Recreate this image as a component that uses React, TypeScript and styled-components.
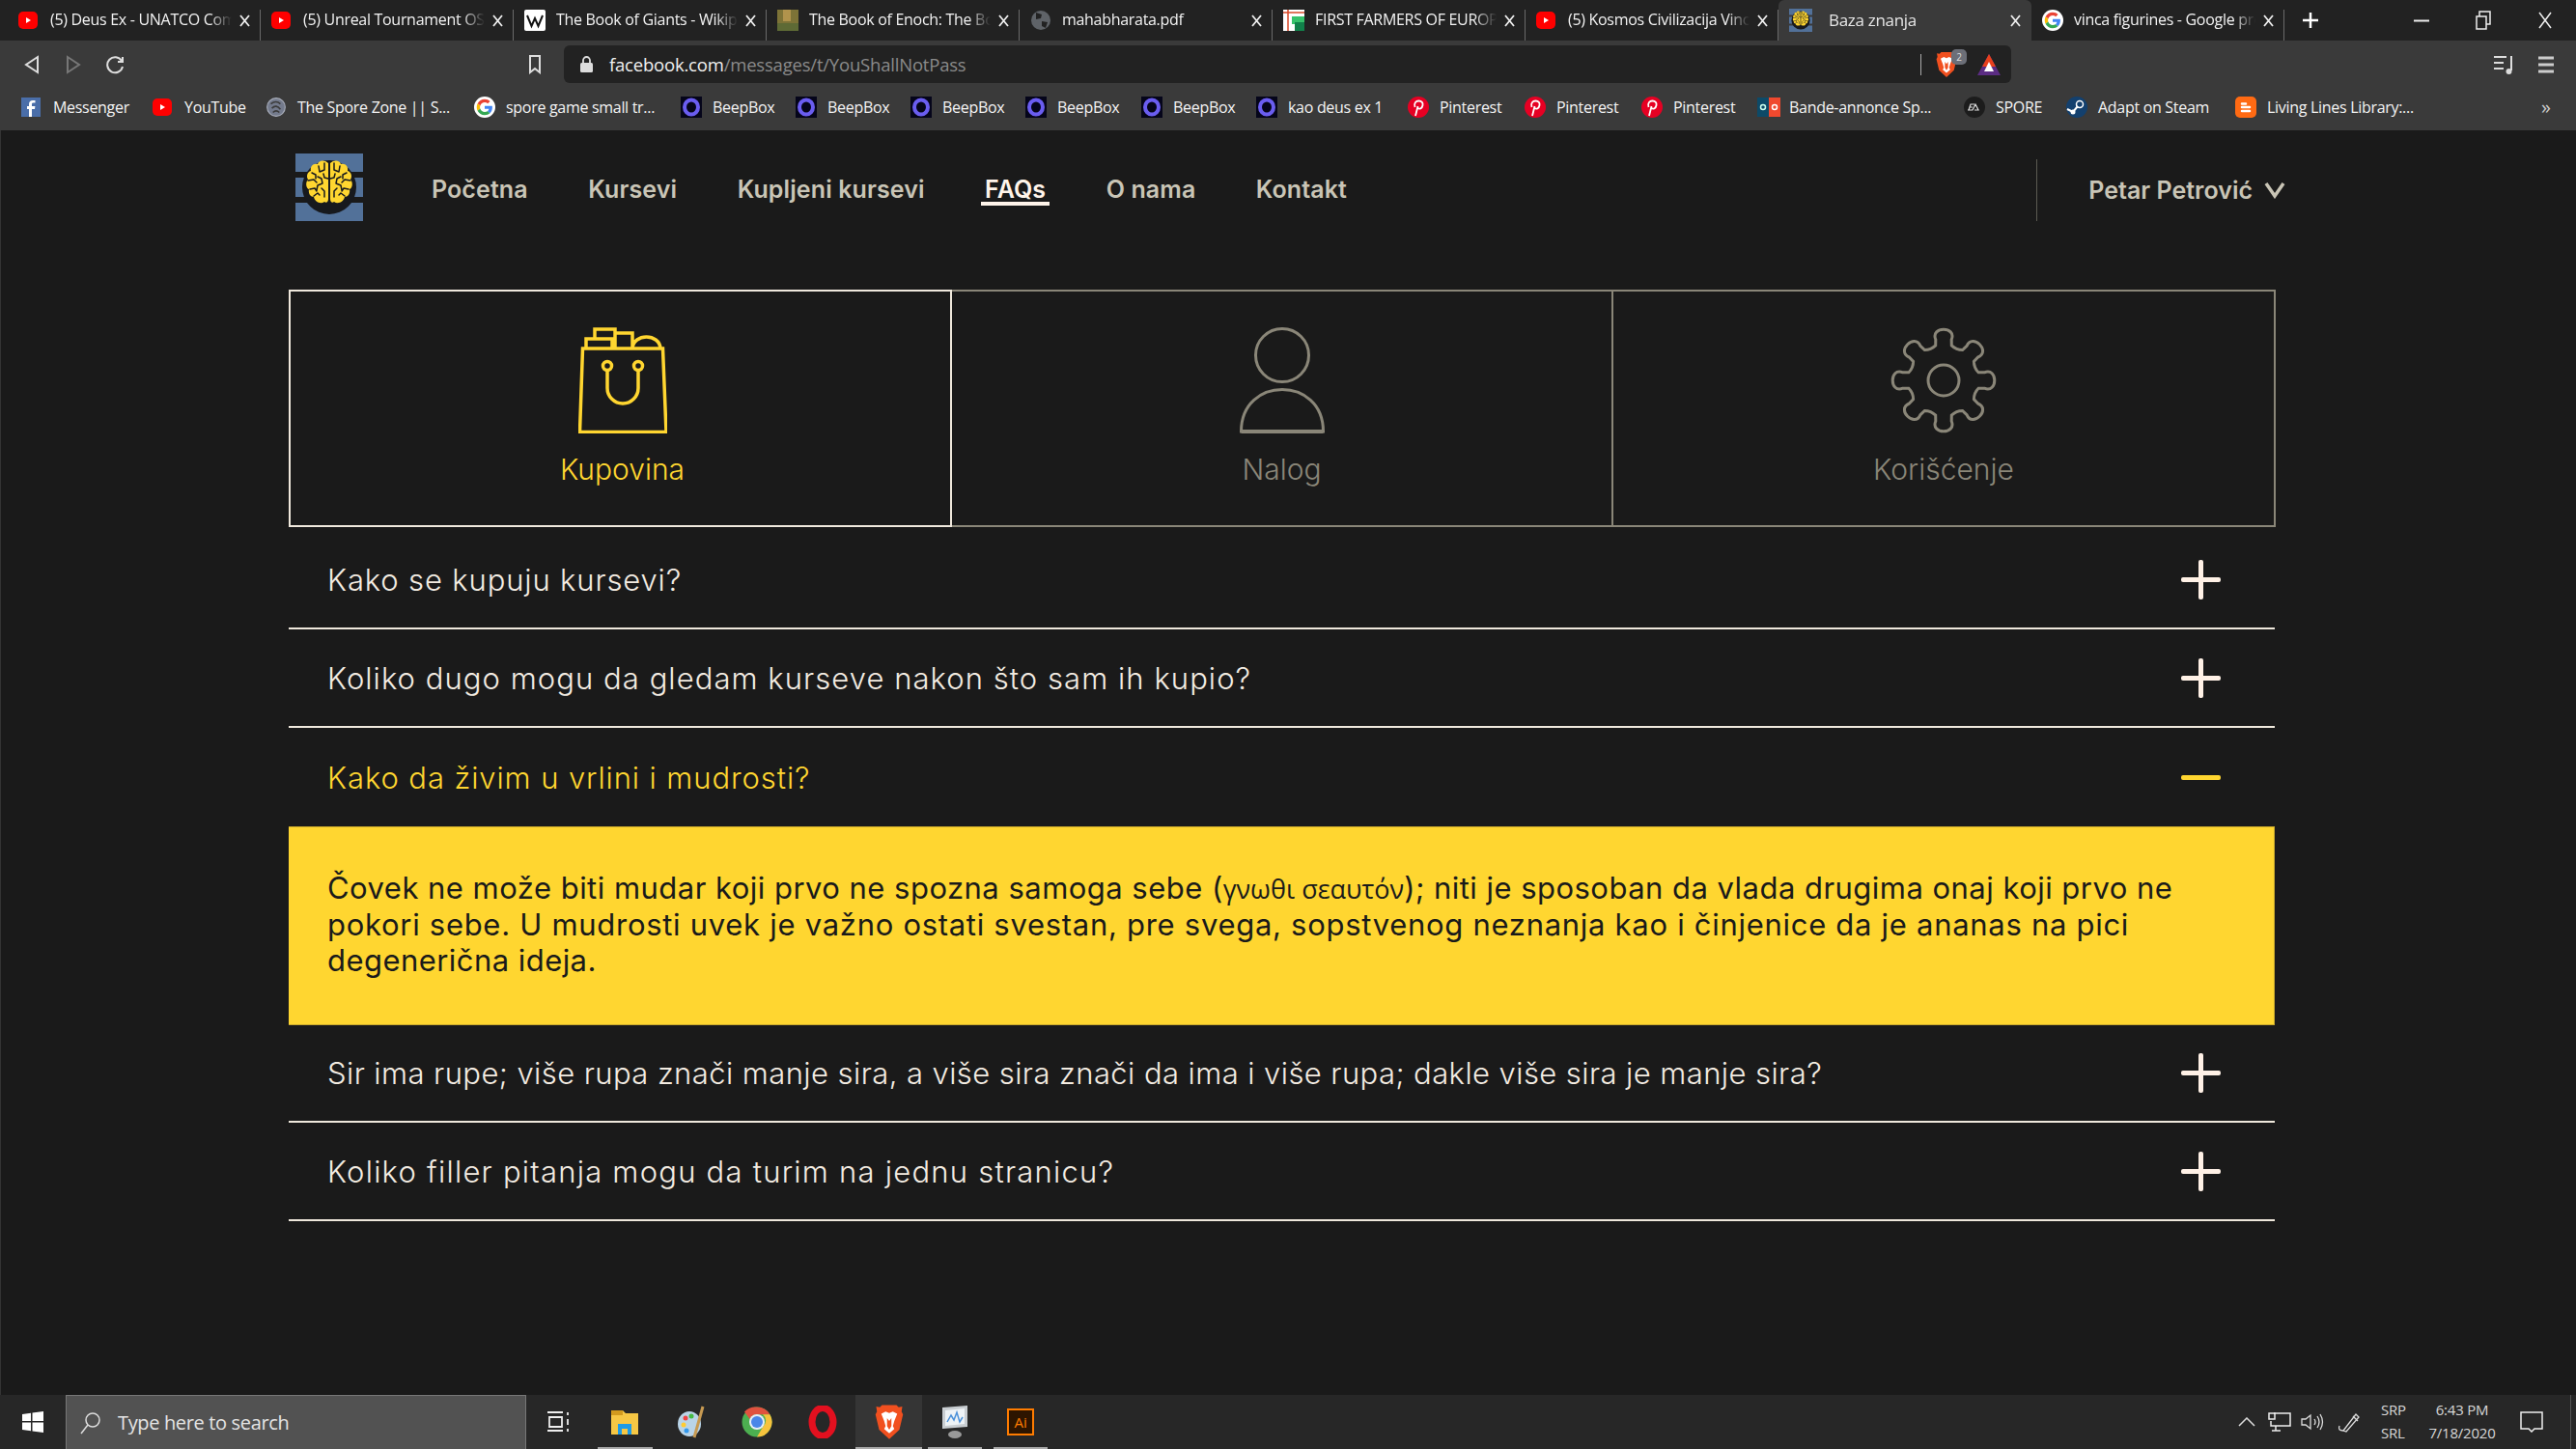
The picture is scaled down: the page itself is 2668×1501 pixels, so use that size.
import { FC, ReactNode } from 'react';
import styled, { createGlobalStyle } from 'styled-components';

const YELLOW = '#ffd630';
const PAGE = '#1a1a1a';
const MUTED = '#8a8678';

const GlobalStyle = createGlobalStyle`
  html, body {
    margin: 0;
    padding: 0;
    background: ${PAGE};
  }
  * {
    box-sizing: border-box;
  }
`;

/* ---------- favicons ---------- */

const Yt = () => (
  <svg width="20" height="20" viewBox="0 0 20 20">
    <rect y="1" width="20" height="18" rx="5" fill="#f00" />
    <path d="M8 7l5 3-5 3z" fill="#fff" />
  </svg>
);

const Wiki = () => (
  <svg width="22" height="22" viewBox="0 0 22 22">
    <rect width="22" height="22" rx="2" fill="#fff" />
    <path d="M3 6l4.500 11L11 9l3.500 8L19 6" fill="none" stroke="#111" strokeWidth="2" />
  </svg>
);

const Painting = () => (
  <svg width="22" height="22" viewBox="0 0 22 22">
    <rect width="22" height="22" fill="#7d7337" />
    <rect x="6" width="8" height="12" fill="#b0934c" />
    <rect y="14" width="22" height="8" fill="#5e6a35" />
  </svg>
);

const Globe = () => (
  <svg width="22" height="22" viewBox="0 0 22 22">
    <circle cx="11" cy="11" r="10" fill="#5f6368" />
    <path d="M6 3l6 2-1 4-5 1zM12 12l6 1-2 6-4-2z" fill="#222" />
  </svg>
);

const Farmers = () => (
  <svg width="22" height="22" viewBox="0 0 22 22">
    <rect width="22" height="22" fill="#fff" />
    <path d="M0 3h22M5 0v22" stroke="#d94a2a" strokeWidth="1.500" />
    <rect x="9" y="7" width="13" height="8" fill="#37c26b" />
    <rect x="12" y="13" width="10" height="9" fill="#11804a" />
  </svg>
);

const Google = () => (
  <svg width="22" height="22" viewBox="0 0 48 48">
    <circle cx="24" cy="24" r="24" fill="#fff" />
    <g transform="translate(6 6) scale(.75)">
      <path fill="#EA4335" d="M24 9.500c3.500 0 6.700 1.200 9.200 3.600l6.900-6.900C35.900 2.400 30.500 0 24 0 14.600 0 6.500 5.400 2.600 13.200l8 6.200C12.400 13.700 17.700 9.500 24 9.500z" />
      <path fill="#4285F4" d="M47 24.500c0-1.600-.1-3.100-.4-4.500H24v9h12.900c-.6 3-2.200 5.500-4.800 7.200l7.700 6C44.300 37.900 47 31.800 47 24.500z" />
      <path fill="#FBBC05" d="M10.500 28.600c-.5-1.400-.8-3-.8-4.600s.3-3.200.8-4.600l-8-6.200C.9 16.500 0 20.100 0 24s.9 7.500 2.600 10.800l7.900-6.200z" />
      <path fill="#34A853" d="M24 48c6.500 0 11.900-2.100 15.900-5.800l-7.700-6c-2.200 1.500-4.900 2.300-8.200 2.300-6.300 0-11.600-4.200-13.500-10l-8 6.200C6.500 42.600 14.600 48 24 48z" />
    </g>
  </svg>
);

const Facebook = () => (
  <svg width="20" height="20" viewBox="0 0 20 20">
    <rect width="20" height="20" fill="#4a6ea9" />
    <path d="M11 20v-8h3l.4-3H11V7c0-1 .4-1.500 1.500-1.500H14.500V3h-2.500C9.500 3 8 4.500 8 7v2H6v3h2v8z" fill="#fff" />
  </svg>
);

const SporeZone = () => (
  <svg width="22" height="22" viewBox="0 0 20 20">
    <circle cx="10" cy="10" r="8.500" fill="#737a8c" stroke="#a9aebb" />
    <path d="M5 7q5-4 9 0M6 11q4-4 8 1M7 15q3-3 6 0" fill="none" stroke="#3c3c3c" strokeWidth="1.500" />
  </svg>
);

const Beep = () => (
  <svg width="22" height="22" viewBox="0 0 22 22">
    <rect width="22" height="22" fill="#05051a" />
    <ellipse cx="11" cy="11" rx="7" ry="7.500" fill="none" stroke="#6a5df0" strokeWidth="4" />
  </svg>
);

const Pin = () => (
  <svg width="22" height="22" viewBox="0 0 22 22">
    <circle cx="11" cy="11" r="11" fill="#e60023" />
    <path d="M8 20l2.500-10M7.500 11c-1.500-4 1-6.500 4-6.500 3 0 4.500 2 4 4.500-.5 3-3 4.500-5 3" fill="none" stroke="#fff" strokeWidth="1.800" />
  </svg>
);

const Bande = () => (
  <svg width="24" height="20" viewBox="0 0 24 20">
    <rect width="12" height="20" fill="#0d4a68" />
    <rect x="12" width="12" height="20" fill="#f0492e" />
    <circle cx="6" cy="10" r="2.500" fill="none" stroke="#cfe" strokeWidth="1.500" />
    <circle cx="18" cy="10" r="2.500" fill="none" stroke="#fff" strokeWidth="1.500" />
  </svg>
);

const Ea = () => (
  <svg width="22" height="22" viewBox="0 0 22 22">
    <circle cx="11" cy="11" r="11" fill="#1c1c1c" />
    <path d="M5 14l2-6h4M6 11h3M4 14h5l3-6 3 6h-4" fill="none" stroke="#ddd" strokeWidth="1.200" />
  </svg>
);

const Steam = () => (
  <svg width="22" height="22" viewBox="0 0 22 22">
    <circle cx="11" cy="11" r="11" fill="#13406e" />
    <circle cx="14" cy="8" r="3.500" fill="none" stroke="#fff" strokeWidth="1.500" />
    <path d="M1 13l6 3 5-6" fill="none" stroke="#fff" strokeWidth="2" />
    <circle cx="7" cy="16" r="2.500" fill="#fff" />
  </svg>
);

const Blogger = () => (
  <svg width="22" height="22" viewBox="0 0 22 22">
    <rect width="22" height="22" rx="5" fill="#ff6a13" />
    <path d="M7 7.500h4M7 11h8M7 15h8" stroke="#fff" strokeWidth="2.500" strokeLinecap="round" />
  </svg>
);

const BraveLion: FC<{ size?: number }> = ({ size = 22 }) => (
  <svg width={size} height={size * 1.25} viewBox="0 0 20 25">
    <path d="M5 1h10l1.500 1.500L19 2l-.500 3.500 1 2L17 18l-7 6.500L3 18 .5 7.500l1-2L1 2l2.500.5z" fill="#f1501f" />
    <path d="M4.500 7l3-1.500 2.500 1 2.500-1 3 1.500-2 5-1 3.500 1 2-3.500 3-3.500-3 1-2-1-3.500z" fill="#fff" />
    <path d="M8.500 10v5.500L10 18l1.500-2.500V10l-1.500 2z" fill="#f1501f" />
  </svg>
);

/* ---------- logo ---------- */

const BRAIN_LEFT =
  'M34 10C30 6 24 7 23 11 18 10 15 14 16 18 12 19 11 24 13 27 10 30 11 36 14 37 13 42 16 45 19 45 20 50 26 53 30 50 32 52 34 50 34 47Z';
const BRAIN_FOLDS = 'M30 10v7l-5 2M24 13l1 6M17 20l4 2v4M13 28l6-1 3 3M23 24l4 2 1 5-5 2-1 5M15 37l5-1 2 3M19 44l4-3 2 2M27 36l3 3v6M34 26l-4-1-1-4';

const BrainLogo: FC<{ size: number }> = ({ size }) => (
  <svg width={size} height={size} viewBox="0 0 70 70">
    <path d="M0 0h70v19H0zM0 25h70v20H0zM0 51h70v19H0z" fill="#527199" />
    <circle cx="35" cy="35" r="28" fill="#17191d" />
    {['', 'translate(70 0) scale(-1 1)'].map((t) => (
      <g key={t} transform={t}>
        <path d={BRAIN_LEFT} fill={YELLOW} />
        <path d={BRAIN_FOLDS} fill="none" stroke="#17191d" strokeWidth="1.500" strokeLinecap="round" strokeLinejoin="round" />
      </g>
    ))}
  </svg>
);

/* ---------- tab strip ---------- */

const TabStrip = styled.div`
  display: flex;
  align-items: stretch;
  height: 42px;
  padding-left: 8px;
  background: #222;
  font-family: 'Open Sans', 'Liberation Sans', sans-serif;
`;

const TabItem = styled.div<{ $active?: boolean }>`
  position: relative;
  display: flex;
  align-items: center;
  width: 262px;
  padding: 0 0 0 11px;
  color: ${(p) => (p.$active ? '#e6e6e6' : '#f2f2f2')};
  background: ${(p) => (p.$active ? '#3a3a3a' : 'transparent')};
  border-radius: ${(p) => (p.$active ? '6px 6px 0 0' : '0')};
  font-size: ${(p) => (p.$active ? 17 : 16)}px;
  letter-spacing: -0.3px;
  &::after {
    content: '';
    position: absolute;
    right: 0;
    top: 10px;
    bottom: 0;
    width: 1px;
    background: ${(p) => (p.$active ? 'transparent' : '#6a6a6a')};
  }
`;

const TabIcon = styled.span<{ $active?: boolean }>`
  display: flex;
  width: ${(p) => (p.$active ? 41 : 33)}px;
  flex: none;
`;

const TabTitle = styled.span<{ $active?: boolean }>`
  width: ${(p) => (p.$active ? 182 : 190)}px;
  flex: none;
  padding-bottom: 2px;
  white-space: nowrap;
  overflow: hidden;
  -webkit-mask-image: linear-gradient(to right, #000 165px, transparent 188px);
  mask-image: linear-gradient(to right, #000 165px, transparent 188px);
`;

const CloseMark = styled.svg`
  margin-left: 6px;
  flex: none;
`;

const X: FC = () => (
  <CloseMark width="11" height="13" viewBox="0 0 11 13">
    <path d="M1 1l9 11M10 1L1 12" stroke="#eee" strokeWidth="1.800" />
  </CloseMark>
);

const NewTab = styled.div`
  width: 54px;
  display: flex;
  align-items: center;
  justify-content: center;
`;

const WindowControls = styled.div`
  margin-left: auto;
  display: flex;
  align-items: center;
`;

const WinButton = styled.div`
  width: 64px;
  height: 42px;
  display: flex;
  align-items: center;
  justify-content: center;
`;

const TABS: { title: string; icon: ReactNode; active?: boolean }[] = [
  { title: '(5) Deus Ex - UNATCO Combat', icon: <Yt /> },
  { title: '(5) Unreal Tournament OST', icon: <Yt /> },
  { title: 'The Book of Giants - Wikipedia', icon: <Wiki /> },
  { title: 'The Book of Enoch: The Book', icon: <Painting /> },
  { title: 'mahabharata.pdf', icon: <Globe /> },
  { title: 'FIRST FARMERS OF EUROPE', icon: <Farmers /> },
  { title: '(5) Kosmos Civilizacija Vinca', icon: <Yt /> },
  { title: 'Baza znanja', icon: <BrainLogo size={24} />, active: true },
  { title: 'vinca figurines - Google pretraga', icon: <Google /> },
];

/* ---------- toolbar ---------- */

const Toolbar = styled.div`
  display: flex;
  align-items: center;
  height: 46px;
  padding-top: 3px;
  background: #3a3a3a;
  font-family: 'Open Sans', 'Liberation Sans', sans-serif;
`;

const ToolSlot = styled.div<{ $w: number; $end?: boolean }>`
  display: flex;
  align-items: center;
  justify-content: ${(p) => (p.$end ? 'flex-end' : 'center')};
  padding-right: ${(p) => (p.$end ? 23 : 0)}px;
  width: ${(p) => p.$w}px;
  flex: none;
`;

const AddressBar = styled.div`
  display: flex;
  align-items: center;
  width: 1499px;
  height: 39px;
  flex: none;
  background: #222;
  border-radius: 6px;
  font-size: 18.5px;
  letter-spacing: -0.2px;
`;

const Lock = styled.div`
  display: flex;
  justify-content: center;
  width: 47px;
  flex: none;
`;

const Domain = styled.span`
  color: #f0f0f0;
`;

const UrlPath = styled.span`
  color: #8a8a8a;
`;

const UrlSpacer = styled.div`
  flex: 1;
`;

const AddressDivider = styled.div`
  width: 1px;
  height: 22px;
  background: #aaa;
`;

const ShieldWrap = styled.div`
  position: relative;
  display: flex;
  margin: 0 20px 0 15px;
`;

const ShieldBadge = styled.span`
  position: absolute;
  left: 16px;
  top: -2px;
  width: 16px;
  height: 16px;
  border-radius: 5px;
  background: #6c6f78;
  color: #ddd;
  font-size: 10px;
  line-height: 16px;
  text-align: center;
`;

const ExtensionMark = styled.svg`
  margin-right: 10px;
`;

const ToolbarRight = styled.div`
  display: flex;
  margin-left: 488px;
`;

/* ---------- bookmarks ---------- */

const BookmarkBar = styled.div`
  display: flex;
  align-items: center;
  height: 47px;
  padding: 0 0 2px 22px;
  background: #3a3a3a;
  font-family: 'Open Sans', 'Liberation Sans', sans-serif;
  font-size: 16px;
  letter-spacing: -0.3px;
  color: #f4f4f4;
`;

const Bookmark = styled.div<{ $w: number }>`
  display: flex;
  align-items: center;
  width: ${(p) => p.$w}px;
  flex: none;
  white-space: nowrap;
`;

const BookmarkIcon = styled.span`
  display: flex;
  width: 33px;
  flex: none;
`;

const MoreBookmarks = styled.span`
  margin-left: 129px;
  font-size: 20px;
  color: #ccc;
`;

const BOOKMARKS: { label: string; icon: ReactNode; w: number }[] = [
  { label: 'Messenger', icon: <Facebook />, w: 136 },
  { label: 'YouTube', icon: <Yt />, w: 117 },
  { label: 'The Spore Zone || S...', icon: <SporeZone />, w: 216 },
  { label: 'spore game small tr...', icon: <Google />, w: 214 },
  { label: 'BeepBox', icon: <Beep />, w: 119 },
  { label: 'BeepBox', icon: <Beep />, w: 119 },
  { label: 'BeepBox', icon: <Beep />, w: 119 },
  { label: 'BeepBox', icon: <Beep />, w: 120 },
  { label: 'BeepBox', icon: <Beep />, w: 119 },
  { label: 'kao deus ex 1', icon: <Beep />, w: 157 },
  { label: 'Pinterest', icon: <Pin />, w: 121 },
  { label: 'Pinterest', icon: <Pin />, w: 121 },
  { label: 'Pinterest', icon: <Pin />, w: 120 },
  { label: 'Bande-annonce Sp...', icon: <Bande />, w: 214 },
  { label: 'SPORE', icon: <Ea />, w: 106 },
  { label: 'Adapt on Steam', icon: <Steam />, w: 175 },
  { label: 'Living Lines Library:...', icon: <Blogger />, w: 188 },
];

/* ---------- site header ---------- */

const Page = styled.main`
  flex: 1;
  padding-left: 298px;
  background: ${PAGE};
  border-left: 1px solid #333;
  font-family: Inter, 'Open Sans', sans-serif;
`;

const SiteNav = styled.nav`
  display: flex;
  align-items: center;
  height: 70px;
  margin: 24px 0 71px;
  padding-left: 7px;
  width: 2068px;
`;

const NavLinks = styled.div`
  display: flex;
  gap: 62.5px;
  margin-left: 71px;
  padding-top: 3px;
`;

const NavLink = styled.a<{ $current?: boolean }>`
  position: relative;
  color: ${(p) => (p.$current ? '#fff4ea' : '#c9c5b6')};
  font-size: 25px;
  font-weight: 600;
  letter-spacing: 0.1px;
  &::after {
    content: '';
    display: ${(p) => (p.$current ? 'block' : 'none')};
    position: absolute;
    left: -4px;
    right: -4px;
    bottom: -2px;
    height: 4px;
    background: #fff4ea;
  }
`;

const UserMenu = styled.div`
  display: flex;
  align-items: center;
  gap: 12px;
  height: 64px;
  margin: 5px 0 0 auto;
  padding-left: 53px;
  border-left: 1px solid #5c5a52;
  color: #c9c5b6;
  font-size: 25px;
  font-weight: 600;
`;

/* ---------- faq ---------- */

const FaqBlock = styled.section`
  width: 2058px;
`;

const CategoryRow = styled.div`
  display: grid;
  grid-template-columns: 687px 685px 686px;
  height: 246px;
`;

const Category = styled.div<{ $active?: boolean }>`
  display: flex;
  flex-direction: column;
  align-items: center;
  padding: 37px 0 0 ${(p) => (p.$active ? 4 : 0)}px;
  border: 2px solid ${(p) => (p.$active ? '#efe8dc' : MUTED)};
  margin-left: -2px;
  z-index: ${(p) => (p.$active ? 1 : 0)};
  color: ${(p) => (p.$active ? YELLOW : MUTED)};
  font-size: 30px;
  font-weight: 300;
  &:first-child {
    margin-left: 0;
  }
`;

const CategoryIcon = styled.svg`
  display: block;
  height: 110px;
  margin-bottom: 19px;
`;

const Question = styled.div<{ $open?: boolean; $first?: boolean; $track: number }>`
  display: flex;
  align-items: center;
  justify-content: space-between;
  width: 2057px;
  height: 102px;
  margin-top: ${(p) => (p.$first ? 4 : 0)}px;
  padding: 0 56px 0 40px;
  border-bottom: ${(p) => (p.$open ? 'none' : '2px solid #efe8dc')};
  color: ${(p) => (p.$open ? YELLOW : '#f3ece2')};
  font-size: 31px;
  font-weight: 300;
  letter-spacing: ${(p) => p.$track}px;
`;

const Toggle = styled.span<{ $open?: boolean }>`
  position: relative;
  width: 41px;
  height: 41px;
  flex: none;
  &::before,
  &::after {
    content: '';
    position: absolute;
    border-radius: 2px;
    background: ${(p) => (p.$open ? YELLOW : '#fff1e6')};
  }
  &::before {
    left: 0;
    right: 0;
    top: 18px;
    height: 5px;
  }
  &::after {
    display: ${(p) => (p.$open ? 'none' : 'block')};
    top: 0;
    bottom: 0;
    left: 18px;
    width: 5px;
  }
`;

const Answer = styled.div`
  width: 2057px;
  height: 206px;
  padding: 44px 40px 0;
  background: ${YELLOW};
  border: 1px solid #c9a92c;
  border-left: none;
  color: ${PAGE};
  font-size: 31px;
  font-weight: 400;
  line-height: 37px;
`;

const AnswerLine = styled.div<{ $track: number }>`
  letter-spacing: ${(p) => p.$track}px;
`;

const GreekPhrase = styled.span`
  font-family: 'Open Sans', 'Noto Sans', sans-serif;
  font-size: 27px;
  letter-spacing: 0;
`;

const LowerQuestions = styled.div`
  margin-top: -1px;
`;

const QUESTIONS_TOP = [
  { text: 'Kako se kupuju kursevi?', track: 0.85 },
  { text: 'Koliko dugo mogu da gledam kurseve nakon što sam ih kupio?', track: 1.05 },
];
const QUESTIONS_BOTTOM = [
  { text: 'Sir ima rupe; više rupa znači manje sira, a više sira znači da ima i više rupa; dakle više sira je manje sira?', track: 0.42 },
  { text: 'Koliko filler pitanja mogu da turim na jednu stranicu?', track: 1.23 },
];

const Gear: FC = () => {
  // eight rounded lobes around the hub
  let d = '';
  for (let i = 0; i < 8; i++) {
    const a = ((i * 45 - 90) * Math.PI) / 180;
    const pt = (r: number, off: number) => {
      const t = a + (off * Math.PI) / 180;
      return `${(55 + r * Math.cos(t)).toFixed(1)} ${(55 + r * Math.sin(t)).toFixed(1)}`;
    };
    d += `${i === 0 ? 'M' : 'L'}${pt(37, -13)} L${pt(43, -11)} C${pt(58, -14)} ${pt(58, 14)} ${pt(43, 11)} L${pt(37, 13)} Q${pt(34, 22.5)} ${pt(37, 32)} `;
  }
  return (
    <CategoryIcon viewBox="0 0 110 110" fill="none" stroke={MUTED} strokeWidth="3">
      <path d={`${d}Z`} />
      <circle cx="55" cy="55" r="16" />
    </CategoryIcon>
  );
};

/* ---------- taskbar ---------- */

const Taskbar = styled.footer`
  display: flex;
  height: 56px;
  background: #272727;
  font-family: 'Open Sans', 'Liberation Sans', sans-serif;
  color: #ddd;
`;

const StartButton = styled.div`
  display: flex;
  align-items: center;
  justify-content: center;
  width: 68px;
`;

const SearchBox = styled.div`
  display: flex;
  align-items: center;
  gap: 17px;
  width: 477px;
  padding: 0 0 0 14px;
  background: #525252;
  border: 1px solid #777;
  border-bottom: none;
  color: #e4e4e4;
  font-size: 20px;
  letter-spacing: -0.35px;
`;

const AppSlot = styled.div<{ $running?: boolean; $focused?: boolean }>`
  position: relative;
  display: flex;
  align-items: center;
  justify-content: center;
  width: 68.3px;
  flex: none;
  background: ${(p) => (p.$focused ? '#353535' : 'transparent')};
  &::after {
    content: '';
    display: ${(p) => (p.$running ? 'block' : 'none')};
    position: absolute;
    left: ${(p) => (p.$focused ? 0 : 6)}px;
    right: ${(p) => (p.$focused ? 0 : 6)}px;
    bottom: 0;
    height: 2px;
    background: #aaa;
  }
`;

const AiTile = styled.span`
  display: flex;
  align-items: center;
  justify-content: center;
  width: 28px;
  height: 28px;
  background: #2d1500;
  border: 2px solid #ff7c00;
  color: #ff7c00;
  font-size: 15px;
`;

const Tray = styled.div`
  display: flex;
  align-items: center;
  margin-left: auto;
`;

const TraySlot = styled.div<{ $w: number }>`
  display: flex;
  align-items: center;
  justify-content: center;
  width: ${(p) => p.$w}px;
  flex: none;
`;

const TrayText = styled.div<{ $w: number; $align?: string; $inset?: number }>`
  width: ${(p) => p.$w}px;
  flex: none;
  padding-left: ${(p) => p.$inset || 0}px;
  padding-bottom: 2px;
  font-size: 15px;
  line-height: 24px;
  letter-spacing: -0.2px;
  text-align: ${(p) => p.$align || 'left'};
  color: #d8d8d8;
`;

const TrayEdge = styled.div`
  width: 1px;
  height: 100%;
  margin: 0 5px 0 10px;
  background: #555;
`;

/* ---------- page ---------- */

const Screen = styled.div`
  display: flex;
  flex-direction: column;
  width: 2668px;
  height: 1501px;
  overflow: hidden;
`;

const App: FC = () => (
  <Screen>
    <GlobalStyle />
    <TabStrip>
      {TABS.map((t) => (
        <TabItem key={t.title} $active={t.active}>
          <TabIcon $active={t.active}>{t.icon}</TabIcon>
          <TabTitle $active={t.active}>{t.title}</TabTitle>
          <X />
        </TabItem>
      ))}
      <NewTab>
        <svg width="18" height="18" viewBox="0 0 18 18">
          <path d="M9 1v16M1 9h16" stroke="#fff" strokeWidth="2.500" />
        </svg>
      </NewTab>
      <WindowControls>
        <WinButton>
          <svg width="16" height="3" viewBox="0 0 16 3">
            <path d="M0 1.500h16" stroke="#eee" strokeWidth="2" />
          </svg>
        </WinButton>
        <WinButton>
          <svg width="16" height="20" viewBox="0 0 16 20">
            <path d="M1 6h10v13H1zM4 6V1h11v13h-4" fill="none" stroke="#eee" strokeWidth="1.500" />
          </svg>
        </WinButton>
        <WinButton>
          <svg width="14" height="18" viewBox="0 0 14 18">
            <path d="M1 1l12 16M13 1L1 17" stroke="#eee" strokeWidth="1.500" />
          </svg>
        </WinButton>
      </WindowControls>
    </TabStrip>

    <Toolbar>
      <ToolSlot $w={66}>
        <svg width="16" height="20" viewBox="0 0 16 20">
          <path d="M14 2v16L2 10z" fill="none" stroke="#ddd" strokeWidth="2" />
        </svg>
      </ToolSlot>
      <ToolSlot $w={20}>
        <svg width="16" height="20" viewBox="0 0 16 20">
          <path d="M2 2v16l12-8z" fill="none" stroke="#777" strokeWidth="2" />
        </svg>
      </ToolSlot>
      <ToolSlot $w={68}>
        <svg width="20" height="20" viewBox="0 0 20 20">
          <path d="M16 6a8 8 0 1 0 1 6M17 2v5h-5" fill="none" stroke="#ddd" strokeWidth="2" />
        </svg>
      </ToolSlot>
      <ToolSlot $w={430} $end>
        <svg width="14" height="20" viewBox="0 0 14 20">
          <path d="M2 1h10v17l-5-4-5 4z" fill="none" stroke="#ddd" strokeWidth="2" />
        </svg>
      </ToolSlot>
      <AddressBar>
        <Lock>
          <svg width="13" height="18" viewBox="0 0 13 18">
            <rect y="7" width="13" height="10" rx="1.500" fill="#ddd" />
            <path d="M3 8V4.500a3.500 3.500 0 0 1 7 0V8" fill="none" stroke="#ddd" strokeWidth="1.800" />
          </svg>
        </Lock>
        <Domain>facebook.com</Domain>
        <UrlPath>/messages/t/YouShallNotPass</UrlPath>
        <UrlSpacer />
        <AddressDivider />
        <ShieldWrap>
          <BraveLion size={22} />
          <ShieldBadge>2</ShieldBadge>
        </ShieldWrap>
        <ExtensionMark width="26" height="24" viewBox="0 0 26 24">
          <path d="M13 1L1 23h24z" fill="#5b2c83" />
          <path d="M13 1L6 14h14z" fill="#e8401c" />
          <path d="M13 9l-5 10h10z" fill="#fff" />
        </ExtensionMark>
      </AddressBar>
      <ToolbarRight>
        <ToolSlot $w={44}>
          <svg width="22" height="22" viewBox="0 0 22 22">
            <path d="M1 3h13M1 9h10M1 15h10" stroke="#ddd" strokeWidth="2" />
            <path d="M19 2v15" stroke="#ddd" strokeWidth="2" />
            <circle cx="16.500" cy="18" r="3" fill="#ddd" />
          </svg>
        </ToolSlot>
        <ToolSlot $w={44}>
          <svg width="16" height="20" viewBox="0 0 16 20">
            <path d="M0 3h16M0 10h16M0 17h16" stroke="#ccc" strokeWidth="3" />
          </svg>
        </ToolSlot>
      </ToolbarRight>
    </Toolbar>

    <BookmarkBar>
      {BOOKMARKS.map((b, i) => (
        <Bookmark key={`${b.label}-${i}`} $w={b.w}>
          <BookmarkIcon>{b.icon}</BookmarkIcon>
          {b.label}
        </Bookmark>
      ))}
      <MoreBookmarks>»</MoreBookmarks>
    </BookmarkBar>

    <Page>
      <SiteNav>
        <BrainLogo size={70} />
        <NavLinks>
          <NavLink>Početna</NavLink>
          <NavLink>Kursevi</NavLink>
          <NavLink>Kupljeni kursevi</NavLink>
          <NavLink $current>FAQs</NavLink>
          <NavLink>O nama</NavLink>
          <NavLink>Kontakt</NavLink>
        </NavLinks>
        <UserMenu>
          Petar Petrović
          <svg width="22" height="18" viewBox="0 0 22 18">
            <path d="M2 2l9 13 9-13" fill="none" stroke="#c9c5b6" strokeWidth="3.500" />
          </svg>
        </UserMenu>
      </SiteNav>

      <FaqBlock>
        <CategoryRow>
          <Category $active>
            <CategoryIcon viewBox="0 0 92 110" fill="none" stroke={YELLOW} strokeWidth="3.500">
              <path d="M4.500 22h83L91 108.500H1.500z" />
              <path d="M8 22V12h27v10M17 12V2h21v10M38 22V6h18v16M56 22c1-16 28-16 29 0" />
              <circle cx="30" cy="40" r="4.500" />
              <circle cx="62" cy="40" r="4.500" />
              <path d="M30 45v18a16 16 0 0 0 32 0V45" />
            </CategoryIcon>
            Kupovina
          </Category>
          <Category>
            <CategoryIcon viewBox="0 0 88 110" fill="none" stroke={MUTED} strokeWidth="3">
              <circle cx="44" cy="29" r="27.500" />
              <path d="M1.500 108C1.500 50 86.500 50 86.500 108z" />
              <path d="M1.500 108h85" strokeWidth="4" />
            </CategoryIcon>
            Nalog
          </Category>
          <Category>
            <Gear />
            Korišćenje
          </Category>
        </CategoryRow>

        {QUESTIONS_TOP.map((q, i) => (
          <Question key={q.text} $first={i === 0} $track={q.track}>
            {q.text}
            <Toggle />
          </Question>
        ))}
        <Question $open $track={0.9}>
          Kako da živim u vrlini i mudrosti?
          <Toggle $open />
        </Question>
        <Answer>
          <AnswerLine $track={0.47}>
            Čovek ne može biti mudar koji prvo ne spozna samoga sebe (<GreekPhrase>γνωθι σεαυτόν</GreekPhrase>); niti je sposoban da vlada drugima onaj koji prvo ne
          </AnswerLine>
          <AnswerLine $track={0.71}>
            pokori sebe. U mudrosti uvek je važno ostati svestan, pre svega, sopstvenog neznanja kao i činjenice da je ananas na pici
          </AnswerLine>
          <AnswerLine $track={0.45}>degenerična ideja.</AnswerLine>
        </Answer>
        <LowerQuestions>
          {QUESTIONS_BOTTOM.map((q) => (
            <Question key={q.text} $track={q.track}>
              {q.text}
              <Toggle />
            </Question>
          ))}
        </LowerQuestions>
      </FaqBlock>
    </Page>

    <Taskbar>
      <StartButton>
        <svg width="24" height="24" viewBox="0 0 24 24">
          <path d="M1 4l9-1.300V11H1zM11.500 2.500L23 1v10H11.500zM1 12.500h9v8.800L1 20zM11.500 12.500H23V23l-11.500-1.600z" fill="#fff" />
        </svg>
      </StartButton>
      <SearchBox>
        <svg width="22" height="24" viewBox="0 0 22 24">
          <circle cx="13" cy="9" r="7" fill="none" stroke="#ddd" strokeWidth="1.500" />
          <path d="M8 14l-7 9" stroke="#ddd" strokeWidth="1.500" />
        </svg>
        Type here to search
      </SearchBox>
      <AppSlot>
        <svg width="24" height="24" viewBox="0 0 24 24">
          <path d="M0 2h16M0 21h16M2 7h13v10H2zM21 2v3M21 9v6M21 19v3" fill="none" stroke="#eee" strokeWidth="1.800" />
        </svg>
      </AppSlot>
      <AppSlot $running>
        <svg width="30" height="30" viewBox="0 0 30 30">
          <path d="M1 3h12l3 3h13v22H1z" fill="#f6c744" />
          <path d="M1 3h12v5H1z" fill="#d29a1e" />
          <path d="M8 28V17h14v11h-4v-6h-6v6z" fill="#1e9be6" />
        </svg>
      </AppSlot>
      <AppSlot>
        <svg width="30" height="34" viewBox="0 0 30 34">
          <ellipse cx="13" cy="19" rx="12" ry="13" fill="#b9d4e8" />
          <circle cx="9" cy="13" r="2.500" fill="#e44" />
          <circle cx="15" cy="11" r="2.500" fill="#4b4" />
          <circle cx="7" cy="20" r="2.500" fill="#fc3" />
          <circle cx="10" cy="26" r="2.500" fill="#39e" />
          <path d="M27 1l-9 32" stroke="#c79a52" strokeWidth="3" />
        </svg>
      </AppSlot>
      <AppSlot>
        <svg width="32" height="32" viewBox="0 0 32 32">
          <circle cx="16" cy="16" r="15.500" fill="#4caf50" />
          <path d="M16 .5A15.500 15.500 0 0 1 29.400 8.200H16A8 8 0 0 0 8.500 13L3 5.500A15.500 15.500 0 0 1 16 .5z" fill="#e0523f" />
          <path d="M29.400 8.200A15.500 15.500 0 0 1 16 31.500L22.500 20.500A8 8 0 0 0 22 8.200z" fill="#f6c33d" />
          <circle cx="16" cy="16" r="8" fill="#e8eef6" />
          <circle cx="16" cy="16" r="6" fill="#4a86e8" />
        </svg>
      </AppSlot>
      <AppSlot>
        <svg width="30" height="34" viewBox="0 0 30 34">
          <ellipse cx="15" cy="17" rx="11" ry="14.500" fill="none" stroke="#e3101f" strokeWidth="7" />
        </svg>
      </AppSlot>
      <AppSlot $running $focused>
        <BraveLion size={30} />
      </AppSlot>
      <AppSlot $running>
        <svg width="30" height="36" viewBox="0 0 30 36">
          <path d="M2 3l26-2v22L2 25z" fill="#c9ced2" />
          <path d="M5 6l20-2v16L5 22z" fill="#eef3f6" />
          <path d="M7 18l4-7 3 5 3-8 3 10 3-5" fill="none" stroke="#4a90d9" strokeWidth="1.500" />
          <ellipse cx="15" cy="31" rx="7" ry="4" fill="#999" />
        </svg>
      </AppSlot>
      <AppSlot $running>
        <AiTile>Ai</AiTile>
      </AppSlot>
      <Tray>
        <TraySlot $w={34}>
          <svg width="18" height="10" viewBox="0 0 18 10">
            <path d="M1 9l8-8 8 8" fill="none" stroke="#ddd" strokeWidth="1.500" />
          </svg>
        </TraySlot>
        <TraySlot $w={34}>
          <svg width="24" height="20" viewBox="0 0 24 20">
            <path d="M6 1h17v13H3V9M8 14v5M4 19h9" fill="none" stroke="#eee" strokeWidth="1.500" />
            <rect x="1" y="1" width="6" height="6" fill="none" stroke="#eee" strokeWidth="1.500" />
          </svg>
        </TraySlot>
        <TraySlot $w={34}>
          <svg width="24" height="20" viewBox="0 0 24 20">
            <path d="M1 7h4l5-4v14l-5-4H1zM14 7q2 3 0 6M17 4q4 6 0 12M20 2q5 8 0 16" fill="none" stroke="#ddd" strokeWidth="1.300" />
          </svg>
        </TraySlot>
        <TraySlot $w={42}>
          <svg width="24" height="22" viewBox="0 0 24 22">
            <path d="M6 20L19 3l3 3L9 21zM16 5l5 5M2 15q-2 5 4 5" fill="none" stroke="#ddd" strokeWidth="1.300" />
          </svg>
        </TraySlot>
        <TrayText $w={54} $inset={12}>
          SRP
          <br />
          SRL
        </TrayText>
        <TrayText $w={84} $align="center">
          6:43 PM
          <br />
          7/18/2020
        </TrayText>
        <TraySlot $w={60}>
          <svg width="24" height="22" viewBox="0 0 24 22">
            <path d="M1 1h22v17H15l-3 3-3-3H1z" fill="none" stroke="#eee" strokeWidth="1.500" />
          </svg>
        </TraySlot>
        <TrayEdge />
      </Tray>
    </Taskbar>
  </Screen>
);

export default App;
